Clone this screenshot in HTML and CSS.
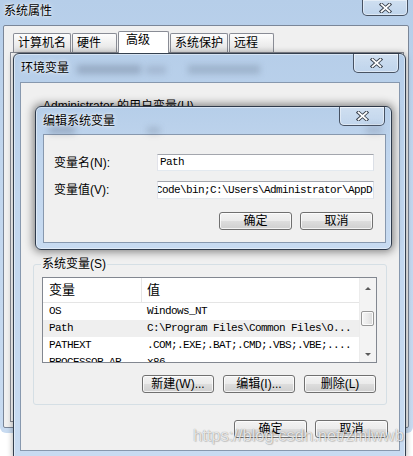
FILE: index.html
```html
<!DOCTYPE html>
<html lang="zh-CN">
<head>
<meta charset="utf-8">
<title>系统属性 - 编辑系统变量</title>
<link rel="stylesheet" href="styles.css">
</head>
<body>
<div class="desk">

  <section class="win win-sys frame">
    <header class="sys-title">
      <span class="title-text">系统属性</span>
      <button class="close close-sys" aria-label="关闭">
        <svg class="xicon" width="13" height="10" viewBox="0 0 13 10"><path class="x-out" d="M2.5 1.5 L10.5 8.5 M10.5 1.5 L2.5 8.5"/><path class="x-in" d="M2.5 1.5 L10.5 8.5 M10.5 1.5 L2.5 8.5"/></svg>
      </button>
    </header>
    <div class="sys-body">
      <div class="tabs">
        <span class="tab">计算机名</span>
        <span class="tab">硬件</span>
        <span class="tab tab-sel">高级</span>
        <span class="tab">系统保护</span>
        <span class="tab">远程</span>
      </div>
      <div class="tab-panel"></div>
    </div>
  </section>

  <section class="win win-env frame">
    <header class="title-bar env-title">
      <span class="title-text">环境变量</span>
      <span class="glass glass-a"></span>
      <span class="glass glass-b"></span>
      <span class="glass glass-c"></span>
      <button class="close close-env" aria-label="关闭">
        <svg class="xicon" width="13" height="10" viewBox="0 0 13 10"><path class="x-out" d="M2.5 1.5 L10.5 8.5 M10.5 1.5 L2.5 8.5"/><path class="x-in" d="M2.5 1.5 L10.5 8.5 M10.5 1.5 L2.5 8.5"/></svg>
      </button>
    </header>
    <div class="client env-client">
      <div class="user-label"><span>Administrator</span> 的用户变量(U)</div>
      <div class="listbox user-list"></div>

      <fieldset class="group">
        <legend>系统变量(S)</legend>
        <div class="listbox sys-list">
          <div class="lv">
            <div class="lv-head"><span class="c1">变量</span><span class="c2">值</span></div>
            <div class="lv-row"><span class="c1 mono">OS</span><span class="c2 mono">Windows_NT</span></div>
            <div class="lv-row sel"><span class="c1 mono">Path</span><span class="c2 mono">C:\Program Files\Common Files\O...</span></div>
            <div class="lv-row"><span class="c1 mono">PATHEXT</span><span class="c2 mono">.COM;.EXE;.BAT;.CMD;.VBS;.VBE;....</span></div>
            <div class="lv-row"><span class="c1 mono">PROCESSOR_AR</span><span class="c2 mono">x86</span></div>
          </div>
          <div class="vscroll">
            <span class="sb-btn"><span class="arr arr-up"></span></span>
            <span class="sb-track"><span class="thumb"></span></span>
            <span class="sb-btn"><span class="arr arr-down"></span></span>
          </div>
        </div>
        <div class="btn-row group-btns">
          <button class="btn btn-sm">新建(W)...</button>
          <button class="btn btn-sm">编辑(I)...</button>
          <button class="btn btn-sm">删除(L)</button>
        </div>
      </fieldset>

      <div class="btn-row env-btns">
        <button class="btn">确定</button>
        <button class="btn">取消</button>
      </div>
    </div>
  </section>

  <section class="win win-edit frame">
    <header class="title-bar edit-title">
      <span class="title-text">编辑系统变量</span>
      <span class="glass glass-d"></span>
      <span class="glass glass-e"></span>
      <span class="glass glass-f"></span>
      <button class="close close-edit" aria-label="关闭">
        <svg class="xicon" width="13" height="10" viewBox="0 0 13 10"><path class="x-out" d="M2.5 1.5 L10.5 8.5 M10.5 1.5 L2.5 8.5"/><path class="x-in" d="M2.5 1.5 L10.5 8.5 M10.5 1.5 L2.5 8.5"/></svg>
      </button>
    </header>
    <div class="client edit-client">
      <div class="field-row">
        <label class="field-label">变量名(N):</label>
        <div class="textbox"><span class="mono">Path</span></div>
      </div>
      <div class="field-row field-row2">
        <label class="field-label">变量值(V):</label>
        <div class="textbox"><span class="mono scrolled">Code\bin;C:\Users\Administrator\AppD</span></div>
      </div>
      <div class="btn-row edit-btns">
        <button class="btn">确定</button>
        <button class="btn">取消</button>
      </div>
    </div>
  </section>

  <div class="watermark">https://blog.csdn.net/zmlwwb</div>
</div>
</body>
</html>
```

FILE: styles.css
```css
* { box-sizing: border-box; }
html, body { margin: 0; padding: 0; }
body {
  width: 413px;
  height: 456px;
  overflow: hidden;
  background: #ffffff;
  font: 12px/14px "Liberation Sans", "Noto Sans CJK SC", sans-serif;
  color: #000;
}
.desk { position: relative; width: 413px; height: 456px; overflow: hidden; }

.win { position: absolute; display: flex; flex-direction: column; }
.frame {
  background: linear-gradient(180deg, #b6cee9 0%, #c1d6ee 35%, #c8dbf1 100%);
}

.mono {
  font-family: "Liberation Mono", "Noto Sans CJK SC", monospace;
  font-size: 11px;
  letter-spacing: -0.6px;
  white-space: nowrap;
}

/* ---------- close button ---------- */
.close {
  width: 46px;
  height: 20px;
  margin-top: -1px;
  padding: 0;
  border: 1px solid rgba(38, 48, 64, 0.8);
  border-radius: 0 0 5px 5px;
  background: linear-gradient(180deg, rgba(255,255,255,0.35), rgba(255,255,255,0.12));
  box-shadow: inset 0 0 0 1px rgba(255,255,255,0.45);
  display: flex;
  align-items: center;
  justify-content: center;
  flex-shrink: 0;
}
.xicon { display: block; }
.x-out { stroke: #39414d; stroke-width: 3.6; stroke-linecap: square; fill: none; }
.x-in { stroke: #ffffff; stroke-width: 1.7; stroke-linecap: square; fill: none; }

.title-text {
  white-space: nowrap;
  text-shadow: 0 0 5px rgba(255,255,255,0.9), 0 0 2px rgba(255,255,255,0.9);
}

/* ---------- outer 系统属性 window ---------- */
.win-sys {
  left: 0;
  top: 0;
  width: 413px;
  height: 433px;
  padding: 0 4px 5px 3px;
  border-radius: 0 0 6px 6px;
}
.sys-title {
  height: 25px;
  display: flex;
  justify-content: space-between;
  align-items: flex-start;
}
.sys-title .title-text { padding: 4px 0 0 1px; }
.close-sys { height: 17px; margin-right: 1px; }

.sys-body {
  flex: 1;
  display: flex;
  flex-direction: column;
  background: #f0f0f0;
  border: 1px solid #7a8698;
  border-radius: 2px;
  padding: 5px 4px 5px 6px;
}
.tabs {
  display: flex;
  align-items: flex-end;
  height: 21px;
  margin-left: 3px;
}
.tab {
  height: 19px;
  min-width: 45px;
  margin-right: 1px;
  padding: 2px 4px 0 4px;
  border: 1px solid #898c95;
  border-bottom: 0;
  border-radius: 2px 2px 0 0;
  background: linear-gradient(180deg, #fdfdfd 0%, #f0f0f0 50%, #e1e1e1 100%);
  white-space: nowrap;
}
.tab-sel {
  height: 22px;
  min-width: 51px;
  margin-bottom: -1px;
  padding: 1px 4px 0 7px;
  background: #ffffff;
  position: relative;
  z-index: 1;
}
.tab-panel {
  flex: 1;
  border: 1px solid #898c95;
  background: #fcfcfc;
}

/* ---------- shared window parts ---------- */
.title-bar {
  display: flex;
  align-items: flex-start;
  flex-shrink: 0;
  position: relative;
}
.title-bar .title-text { padding-left: 7px; }
.title-bar .close { margin-left: auto; margin-right: 6px; }

.client {
  flex: 1;
  background: #f0f0f0;
  border: 1px solid #8798ae;
  display: flex;
  flex-direction: column;
}

.glass {
  display: block;
  background: rgba(70, 80, 100, 0.28);
  filter: blur(3px);
  flex-shrink: 0;
}

/* ---------- 环境变量 window ---------- */
.win-env {
  left: 13px;
  top: 53px;
  width: 393px;
  height: 406px;
  border: 1px solid #34404f;
  border-radius: 6px 6px 0 0;
  box-shadow: 0 0 6px rgba(0,0,0,0.35), inset 0 0 0 1px rgba(255,255,255,0.45);
}
.env-title { height: 28px; }
.env-title .title-text { padding-top: 7px; }
.glass-a { width: 64px; height: 9px; margin: 11px 0 0 8px; }
.glass-b { width: 20px; height: 8px; margin: 12px 0 0 5px; background: rgba(70,80,100,0.18); }
.glass-c { width: 72px; height: 9px; margin: 11px 0 0 22px; background: rgba(70,80,100,0.22); }

.env-client {
  margin: 0 5px 7px 6px;
  padding: 16px 12px 0 12px;
}
.user-label { margin-left: 10px; height: 14px; white-space: nowrap; }
.user-list { margin: 5px 10px 0 9px; height: 87px; }

.group {
  margin: 52px 0 0 0;
  padding: 0 9px 11px 8px;
  border: 1px solid #d5dfe5;
  border-radius: 3px;
  min-width: 0;
}
.group legend {
  padding: 0 1px;
  margin-left: -1px;
  line-height: 14px;
}
.sys-list { margin-top: 6px; height: 86px; }
.group-btns { margin-top: 12px; margin-right: 1px; }
.env-btns { margin-top: 15px; margin-right: -1px; }

/* ---------- list view ---------- */
.listbox {
  display: flex;
  border: 1px solid #828790;
  background: #ffffff;
  overflow: hidden;
  flex-shrink: 0;
}
.lv { flex: 1; min-width: 0; overflow: hidden; }
.lv-head {
  display: flex;
  height: 25px;
  border-bottom: 1px solid #e5e5e5;
  font-size: 13px;
}
.lv-head span { padding-top: 5px; }
.lv-head .c1 { border-right: 1px solid #e5e5e5; }
.lv-row { display: flex; height: 17px; line-height: 17px; }
.lv-row.sel { background: #efefef; }
.c1 { width: 99px; padding-left: 6px; overflow: hidden; flex-shrink: 0; }
.c2 { flex: 1; padding-left: 5px; overflow: hidden; }

.vscroll {
  width: 17px;
  flex-shrink: 0;
  display: flex;
  flex-direction: column;
  background: #f3f3f3;
  border-left: 1px solid #ececec;
}
.sb-btn {
  height: 17px;
  display: flex;
  align-items: center;
  justify-content: center;
  flex-shrink: 0;
}
.arr { width: 0; height: 0; border-left: 3px solid transparent; border-right: 3px solid transparent; }
.arr-up { border-bottom: 3px solid #5a5a5a; margin-top: 3px; }
.arr-down { border-top: 3px solid #5a5a5a; margin-top: 1px; }
.sb-track { flex: 1; display: flex; flex-direction: column; }
.thumb {
  height: 15px;
  margin: 16px 2px 0 1px;
  border: 1px solid #979797;
  border-radius: 2px;
  background: linear-gradient(90deg, #f6f6f6 0%, #e9e9e9 55%, #dadada 100%);
  box-shadow: inset 0 0 0 1px #fbfbfb;
}

/* ---------- buttons ---------- */
.btn-row { display: flex; justify-content: flex-end; gap: 8px; flex-shrink: 0; }
.group-btns { gap: 9px; }
.btn {
  width: 73px;
  height: 18px;
  padding: 0;
  border: 1px solid #707070;
  border-radius: 3px;
  background: linear-gradient(180deg, #f3f3f3 0%, #ebebeb 48%, #dddddd 52%, #cfcfcf 100%);
  box-shadow: inset 0 0 0 1px rgba(255,255,255,0.75);
  font: 12px/14px "Liberation Sans", "Noto Sans CJK SC", sans-serif;
  color: #000;
  white-space: nowrap;
}
.btn-sm { width: 72px; }

/* ---------- 编辑系统变量 dialog ---------- */
.win-edit {
  left: 35px;
  top: 106px;
  width: 357px;
  height: 144px;
  border: 1px solid #2e3a4b;
  border-radius: 6px;
  box-shadow: 0 0 8px 2px rgba(0,0,0,0.45), inset 0 0 0 1px rgba(255,255,255,0.45);
}
.edit-title { height: 27px; }
.edit-title .title-text { padding-top: 7px; }
.glass-d { position: absolute; left: 13px; top: 19px; width: 26px; height: 8px; }
.glass-e { position: absolute; left: 111px; top: 20px; width: 13px; height: 7px; background: rgba(70,80,100,0.2); }
.glass-f { position: absolute; left: 330px; top: 19px; width: 16px; height: 8px; background: rgba(70,80,100,0.18); }

.edit-client {
  margin: 0 5px 6px 7px;
  padding: 19px 11px 0 10px;
}
.field-row { display: flex; align-items: center; height: 17px; }
.field-row2 { margin-top: 10px; height: 18px; }
.field-label { width: 103px; flex-shrink: 0; white-space: nowrap; }
.textbox {
  flex: 1;
  height: 100%;
  border: 1px solid #abadb3;
  border-top-color: #a3a6ad;
  border-right-color: #dbdfe6;
  border-bottom-color: #e3e9ef;
  border-left-color: #e2e3ea;
  background: #ffffff;
  overflow: hidden;
  padding-left: 2px;
  line-height: 15px;
  display: flex;
  align-items: center;
}
.scrolled { margin-left: -4px; }
.edit-btns { margin-top: 13px; padding-right: 1px; }

/* ---------- watermark ---------- */
.watermark {
  position: absolute;
  left: 193px;
  top: 426px;
  font: 16.5px/19px "Liberation Sans", sans-serif;
  color: rgba(255,255,255,0.8);
  text-shadow: 0 0 1px rgba(0,0,0,0.45), 1px 1px 1px rgba(0,0,0,0.15);
  white-space: nowrap;
  pointer-events: none;
}
```
